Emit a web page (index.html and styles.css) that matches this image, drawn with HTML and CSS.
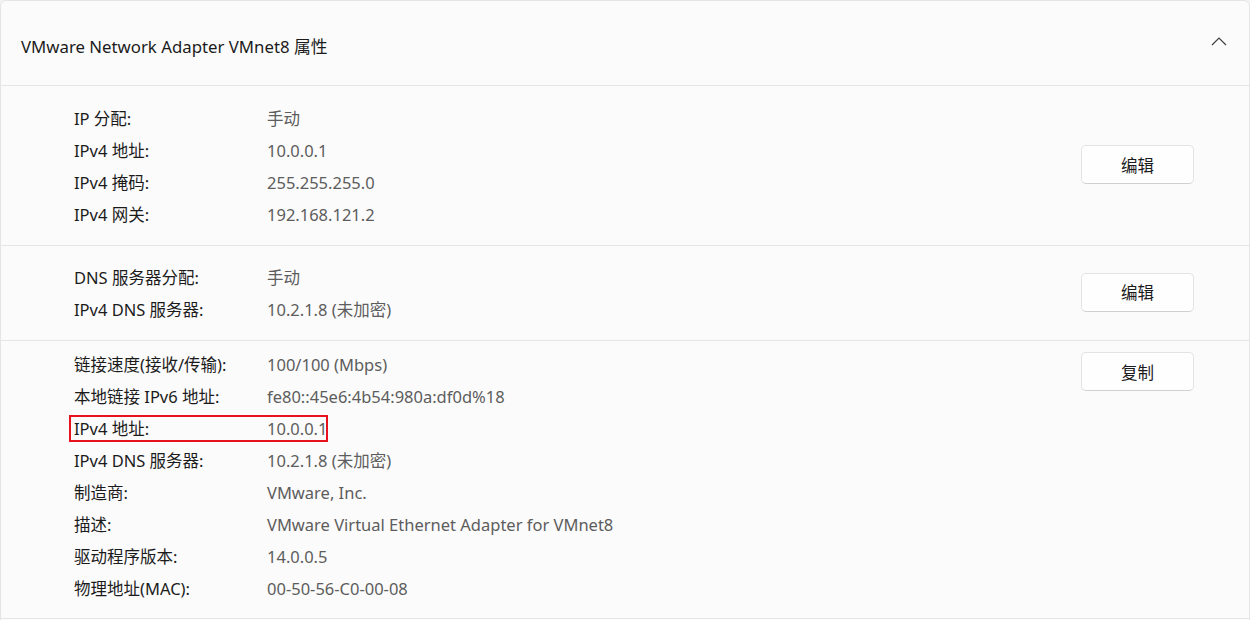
FILE: index.html
```html
<!DOCTYPE html>
<html lang="zh-CN">
<head>
<meta charset="utf-8">
<title>VMware Network Adapter VMnet8 属性</title>
<link rel="stylesheet" href="styles.css">
</head>
<body>
<div class="card">
  <div class="header">
    <div class="title">VMware Network Adapter VMnet8 属性</div>
    <svg class="chev" width="16" height="10" viewBox="0 0 16 10"><path d="M1 9 L8 2 L15 9" fill="none" stroke="#404040" stroke-width="1.2"/></svg>
  </div>
  <div class="section s1">
    <div class="grid">
      <div class="lab">IP 分配:</div><div class="val">手动</div>
      <div class="lab">IPv4 地址:</div><div class="val">10.0.0.1</div>
      <div class="lab">IPv4 掩码:</div><div class="val">255.255.255.0</div>
      <div class="lab">IPv4 网关:</div><div class="val">192.168.121.2</div>
    </div>
    <button class="btn">编辑</button>
  </div>
  <div class="section s2">
    <div class="grid">
      <div class="lab">DNS 服务器分配:</div><div class="val">手动</div>
      <div class="lab">IPv4 DNS 服务器:</div><div class="val">10.2.1.8 (未加密)</div>
    </div>
    <button class="btn">编辑</button>
  </div>
  <div class="section s3">
    <div class="grid">
      <div class="lab">链接速度(接收/传输):</div><div class="val">100/100 (Mbps)</div>
      <div class="lab">本地链接 IPv6 地址:</div><div class="val">fe80::45e6:4b54:980a:df0d%18</div>
      <div class="lab">IPv4 地址:<span class="mark"></span></div><div class="val">10.0.0.1</div>
      <div class="lab">IPv4 DNS 服务器:</div><div class="val">10.2.1.8 (未加密)</div>
      <div class="lab">制造商:</div><div class="val">VMware, Inc.</div>
      <div class="lab">描述:</div><div class="val">VMware Virtual Ethernet Adapter for VMnet8</div>
      <div class="lab">驱动程序版本:</div><div class="val">14.0.0.5</div>
      <div class="lab">物理地址(MAC):</div><div class="val">00-50-56-C0-00-08</div>
    </div>
    <button class="btn">复制</button>
  </div>
</div>
</body>
</html>
```
FILE: styles.css
```css
html, body { margin: 0; padding: 0; background: #f3f3f3; }
body {
  font-family: "Noto Sans", "Noto Sans CJK SC", sans-serif;
  font-size: 16.5px;
  color: #1b1b1b;
  width: 1250px;
  height: 620px;
  overflow: hidden;
}
.card {
  width: 1248px;
  background: #fbfbfb;
  border: 1px solid #e5e5e5;
  border-radius: 6px;
  height: 700px;
}
.header {
  height: 84px;
  display: flex;
  align-items: center;
  justify-content: space-between;
  padding: 0 22px 0 20px;
  border-bottom: 1px solid #e5e5e5;
}
.title { font-size: 16.8px; color: #1b1b1b; margin-top: 5px; }
.chev { margin-top: -4px; }
.section {
  display: flex;
  justify-content: space-between;
  padding-left: 73px;
  padding-right: 55px;
  border-bottom: 1px solid #e5e5e5;
}
.s1 { padding-top: 16px; padding-bottom: 15px; align-items: center; }
.s2 { padding-top: 15px; padding-bottom: 15px; align-items: center; }
.s3 { padding-top: 7px; padding-bottom: 14px; align-items: flex-start; }
.s1 .btn { margin-top: -3px; }
.s2 .btn { margin-top: -2px; }
.s3 .btn { margin-top: 4px; }
.grid {
  display: grid;
  grid-template-columns: 193px auto;
  grid-auto-rows: 32px;
  align-items: center;
}
.lab { position: relative; }
.val { color: #5d5d5d; }
.mark {
  position: absolute;
  left: -5px;
  top: -1px;
  width: 255px;
  height: 23px;
  border: 2px solid #e8111e;
}
.btn {
  width: 113px;
  height: 39px;
  background: #fefefe;
  border: 1px solid #e3e3e3;
  border-bottom-color: #d0d0d0;
  border-radius: 5px;
  font-family: inherit;
  font-size: 16.5px;
  color: #1b1b1b;
  padding: 0;
}
```
